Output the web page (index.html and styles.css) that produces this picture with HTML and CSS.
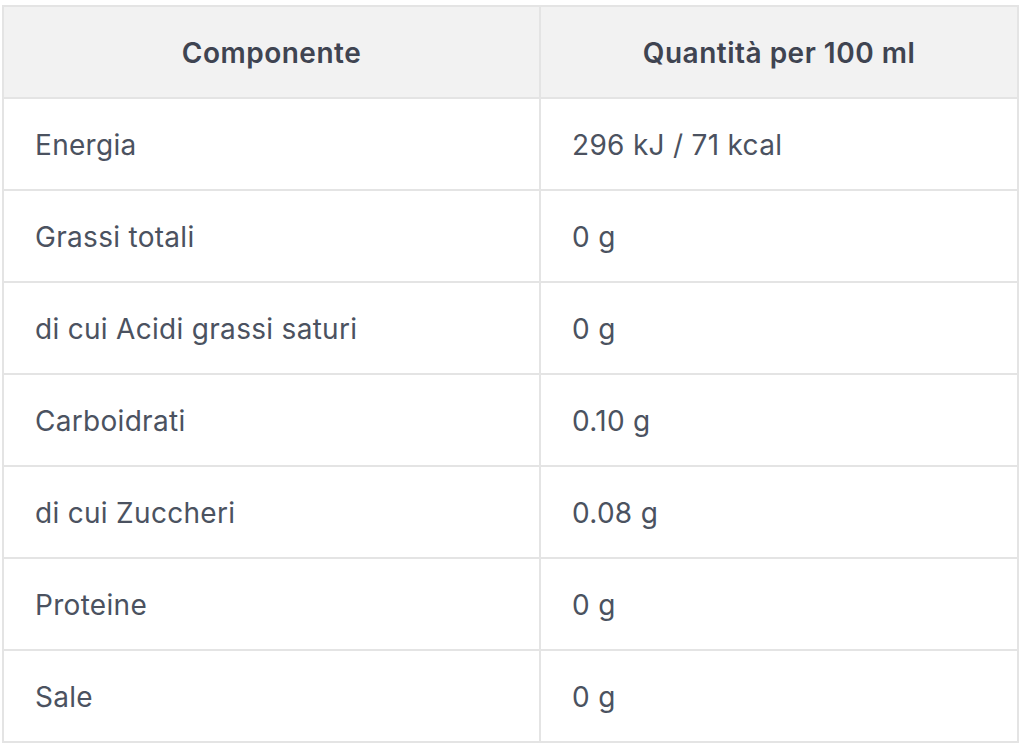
FILE: index.html
```html
<!DOCTYPE html>
<html lang="it">
<head>
<meta charset="utf-8">
<title>Valori nutrizionali</title>
<link rel="stylesheet" href="styles.css">
</head>
<body>
<table class="nutri">
  <colgroup>
    <col class="col-name">
    <col class="col-value">
  </colgroup>
  <thead>
    <tr><th>Componente</th><th>Quantità per 100 ml</th></tr>
  </thead>
  <tbody>
    <tr><td>Energia</td><td>296 kJ / 71 kcal</td></tr>
    <tr><td>Grassi totali</td><td>0 g</td></tr>
    <tr><td>di cui Acidi grassi saturi</td><td>0 g</td></tr>
    <tr><td>Carboidrati</td><td>0.10 g</td></tr>
    <tr><td>di cui Zuccheri</td><td>0.08 g</td></tr>
    <tr><td>Proteine</td><td>0 g</td></tr>
    <tr><td>Sale</td><td>0 g</td></tr>
  </tbody>
</table>
</body>
</html>
```
FILE: styles.css
```css
html, body {
  margin: 0;
  padding: 0;
  background: #ffffff;
}
body {
  padding: 5px 0 0 2px;
  font-family: Inter, "Noto Sans", "Liberation Sans", sans-serif;
}
.nutri {
  width: 1017px;
  table-layout: fixed;
  border-collapse: separate;
  border-spacing: 0;
  border-top: 2px solid #e4e4e4;
  border-left: 2px solid #e4e4e4;
}
.col-name { width: 537px; }
.col-value { width: 478px; }
.nutri th,
.nutri td {
  border-right: 2px solid #e4e4e4;
  border-bottom: 2px solid #e4e4e4;
  padding: 26px 31px 24px;
  font-size: 28px;
  line-height: 40px;
  height: 40px;
  white-space: nowrap;
}
.nutri th {
  background: #f2f2f2;
  color: #3f4451;
  font-weight: 600;
  letter-spacing: 0.5px;
  text-align: center;
}
.nutri td {
  color: #4b5260;
  font-weight: 400;
  letter-spacing: 0.3px;
  text-align: left;
}
```
